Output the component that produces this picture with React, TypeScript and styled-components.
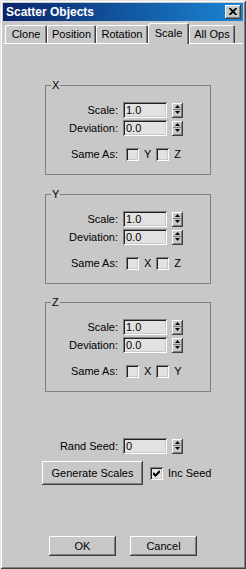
import React from 'react'
import styled, { createGlobalStyle } from 'styled-components'

const face = '#c8c8c8'
const well = '#e2e2e2'

const GlobalStyle = createGlobalStyle`
  * { box-sizing: border-box; }
  body {
    margin: 0;
    background: ${face};
  }
`

const Window = styled.div`
  width: 246px;
  height: 569px;
  padding: 3px;
  display: flex;
  flex-direction: column;
  background: ${face};
  font-family: 'Liberation Sans', Arial, sans-serif;
  font-size: 11px;
  color: #000;
  box-shadow: inset 1px 1px #e4e4e4, inset -1px -1px #404040, inset 2px 2px #fff,
    inset -2px -2px #808080;
`

const TitleBar = styled.div`
  height: 18px;
  display: flex;
  align-items: center;
  justify-content: space-between;
  padding: 0 2px 0 3px;
  background: linear-gradient(to right, #0a246a, #1a86d4);
`

const TitleText = styled.span`
  color: #fff;
  font-weight: bold;
  font-size: 12px;
`

const raised = `
  background: ${face};
  box-shadow: inset -1px -1px #404040, inset 1px 1px #fff, inset -2px -2px #808080;
`

const sunken = `
  background: ${well};
  box-shadow: inset 1px 1px #808080, inset -1px -1px #fff, inset 2px 2px #202020,
    inset -2px -2px ${face};
`

const CloseButton = styled.div`
  ${raised}
  width: 16px;
  height: 14px;
  display: flex;
  align-items: center;
  justify-content: center;
  padding-bottom: 1px;
`

const TabRow = styled.div`
  height: 22px;
  display: flex;
  align-items: flex-end;
  padding-left: 2px;
`

const Tab = styled.div<{ $w: number; $active?: boolean }>`
  position: relative;
  width: ${({ $w }) => $w}px;
  height: ${({ $active }) => ($active ? 21 : 18)}px;
  margin-bottom: ${({ $active }) => ($active ? -1 : 0)}px;
  z-index: ${({ $active }) => ($active ? 1 : 0)};
  display: flex;
  align-items: center;
  justify-content: center;
  padding-bottom: ${({ $active }) => ($active ? 2 : 0)}px;
  background: ${face};
  border-radius: 2px 2px 0 0;
  box-shadow: inset 1px 1px #fff, inset -1px 0 #404040, inset -2px 0 #808080;
`

const Panel = styled.div`
  flex: 1;
  display: flex;
  flex-direction: column;
  border-top: 1px solid #fff;
`

const Content = styled.div`
  display: flex;
  flex-direction: column;
  padding-left: 39px;
`

const Group = styled.div<{ $top: number }>`
  position: relative;
  width: 166px;
  height: 90px;
  margin: ${({ $top }) => $top}px 0 0 3px;
  padding-top: 16px;
  border: 1px solid #808080;
  display: flex;
  flex-direction: column;
`

const Legend = styled.span`
  position: absolute;
  top: -7px;
  left: 5px;
  padding: 0 1px;
  line-height: 13px;
  background: ${face};
`

const Row = styled.div<{ $top?: number }>`
  display: flex;
  align-items: center;
  height: 16px;
  margin-top: ${({ $top }) => $top ?? 0}px;
`

const Label = styled.span<{ $w: number }>`
  width: ${({ $w }) => $w}px;
  text-align: right;
  white-space: nowrap;
`

const Field = styled.div`
  ${sunken}
  width: 44px;
  height: 16px;
  margin-left: 5px;
  padding: 1px 0 0 3px;
  line-height: 14px;
`

const Spinner = styled.div`
  ${raised}
  width: 11px;
  height: 15px;
  margin-left: 5px;
  display: flex;
  flex-direction: column;
  padding: 1px 2px 2px 1px;
`

const SpinHalf = styled.div<{ $down?: boolean }>`
  flex: 1;
  display: flex;
  align-items: center;
  justify-content: center;
  border-top: ${({ $down }) => ($down ? '1px solid #808080' : 'none')};
`

const Check = styled.div<{ $gap: number }>`
  ${sunken}
  width: 13px;
  height: 13px;
  margin-left: ${({ $gap }) => $gap}px;
  margin-right: 5px;
  display: flex;
  align-items: center;
  justify-content: center;
`

const Button = styled.div<{ $w: number; $h: number }>`
  ${raised}
  width: ${({ $w }) => $w}px;
  height: ${({ $h }) => $h}px;
  display: flex;
  align-items: center;
  justify-content: center;
  padding-bottom: 1px;
`

const ActionRow = styled.div`
  display: flex;
  align-items: center;
  margin-top: 7px;
`

const ButtonBar = styled.div`
  display: flex;
  justify-content: center;
  gap: 14px;
  margin-top: 51px;
`

const Arrow = ({ down }: { down?: boolean }) => (
  <svg width="5" height="3" viewBox="0 0 5 3">
    <path d={down ? 'M0 0H5L2.5 3Z' : 'M0 3H5L2.5 0Z'} fill="#000" />
  </svg>
)

const Spin = () => (
  <Spinner>
    <SpinHalf>
      <Arrow />
    </SpinHalf>
    <SpinHalf $down>
      <Arrow down />
    </SpinHalf>
  </Spinner>
)

const CheckMark = () => (
  <svg width="7" height="7" viewBox="0 0 7 7">
    <path d="M0 3L2.5 5.5L7 1" fill="none" stroke="#000" strokeWidth="2" />
  </svg>
)

const AxisGroup = ({ axis, others, top }: { axis: string; others: string[]; top: number }) => (
  <Group $top={top}>
    <Legend>{axis}</Legend>
    <Row>
      <Label $w={72}>Scale:</Label>
      <Field>1.0</Field>
      <Spin />
    </Row>
    <Row $top={2}>
      <Label $w={72}>Deviation:</Label>
      <Field>0.0</Field>
      <Spin />
    </Row>
    <Row $top={10}>
      <Label $w={72}>Same As:</Label>
      <Check $gap={8} />
      <span>{others[0]}</span>
      <Check $gap={5} />
      <span>{others[1]}</span>
    </Row>
  </Group>
)

const tabs = [
  { name: 'Clone', w: 42 },
  { name: 'Position', w: 49 },
  { name: 'Rotation', w: 52 },
  { name: 'Scale', w: 41, active: true },
  { name: 'All Ops', w: 46 },
]

const App = () => {
  return (
    <Window>
      <GlobalStyle />
      <TitleBar>
        <TitleText>Scatter Objects</TitleText>
        <CloseButton>
          <svg width="8" height="7" viewBox="0 0 8 7">
            <path d="M0.5 0L7.5 7M7.5 0L0.5 7" stroke="#000" strokeWidth="1.8" />
          </svg>
        </CloseButton>
      </TitleBar>
      <TabRow>
        {tabs.map((t) => (
          <Tab key={t.name} $w={t.w} $active={t.active}>
            {t.name}
          </Tab>
        ))}
      </TabRow>
      <Panel>
        <Content>
          <AxisGroup axis="X" others={['Y', 'Z']} top={41} />
          <AxisGroup axis="Y" others={['X', 'Z']} top={19} />
          <AxisGroup axis="Z" others={['X', 'Y']} top={18} />
          <Row $top={46}>
            <Label $w={76}>Rand Seed:</Label>
            <Field>0</Field>
            <Spin />
          </Row>
          <ActionRow>
            <Button $w={101} $h={24}>
              Generate Scales
            </Button>
            <Check $gap={7}>
              <CheckMark />
            </Check>
            <span>Inc Seed</span>
          </ActionRow>
        </Content>
        <ButtonBar>
          <Button $w={67} $h={20}>
            OK
          </Button>
          <Button $w={67} $h={20}>
            Cancel
          </Button>
        </ButtonBar>
      </Panel>
    </Window>
  )
}

export default App
